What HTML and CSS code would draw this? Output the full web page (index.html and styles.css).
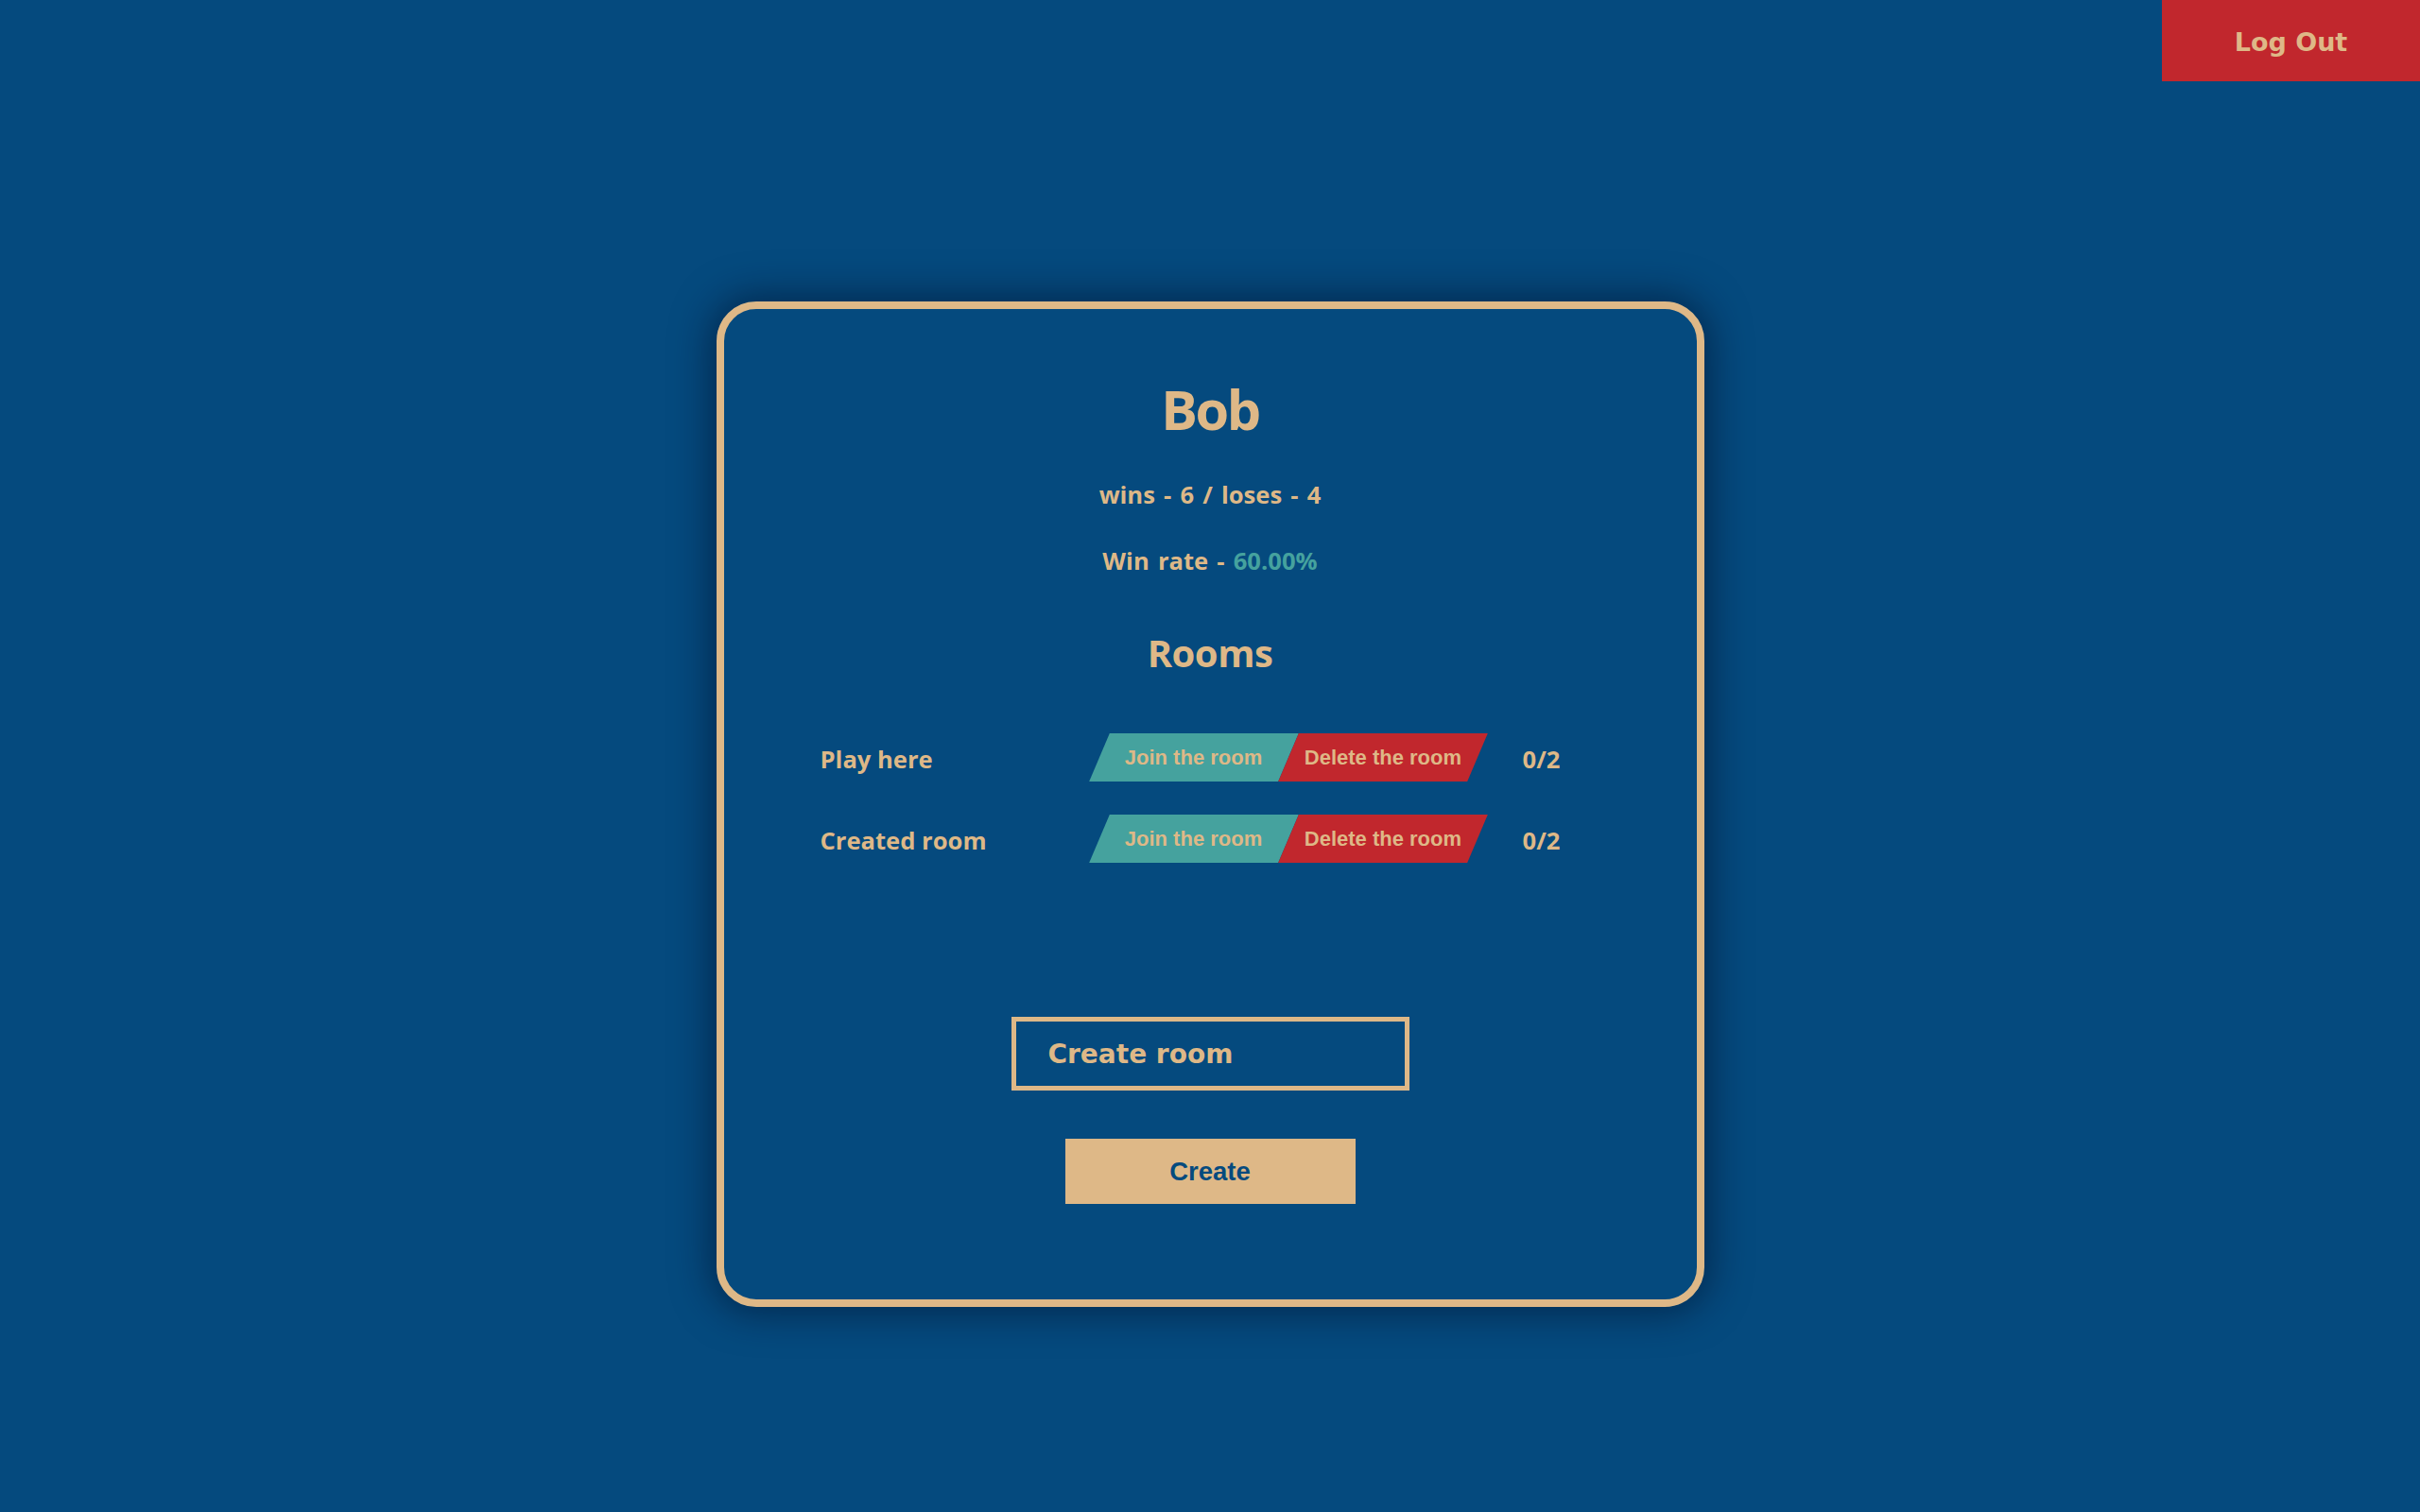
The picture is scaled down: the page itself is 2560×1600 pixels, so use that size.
FILE: index.html
```html
<!DOCTYPE html>
<html lang="en">
<head>
<meta charset="utf-8">
<title>Profile</title>
<link rel="stylesheet" href="styles.css">
</head>
<body>
<header class="topbar">
  <button class="logout">Log Out</button>
</header>
<main class="card">
  <h1 class="name">Bob</h1>
  <p class="stat">wins - 6 / loses - 4</p>
  <p class="stat rate">Win rate - <span class="pct">60.00%</span></p>
  <h2 class="rooms-title">Rooms</h2>
  <div class="rooms">
    <div class="room">
      <span class="room-name">Play here</span>
      <div class="actions">
        <button class="btn join"><span>Join the room</span></button>
        <button class="btn del"><span>Delete the room</span></button>
      </div>
      <span class="count">0/2</span>
    </div>
    <div class="room">
      <span class="room-name">Created room</span>
      <div class="actions">
        <button class="btn join"><span>Join the room</span></button>
        <button class="btn del"><span>Delete the room</span></button>
      </div>
      <span class="count">0/2</span>
    </div>
  </div>
  <input class="room-input" type="text" placeholder="Create room">
  <button class="create">Create</button>
</main>
</body>
</html>
```
FILE: styles.css
```css
html, body {
  margin: 0;
  padding: 0;
}
body {
  background: #054a7e;
  min-height: 1600px;
  font-family: "Open Sans", "Noto Sans", sans-serif;
  font-weight: 700;
  color: #deb887;
}
.topbar {
  display: flex;
  justify-content: flex-end;
  height: 86px;
}
.logout {
  width: 273px;
  height: 86px;
  border: none;
  margin: 0;
  padding: 2px 0 0;
  background: #c1272d;
  color: #deb887;
  font-family: "DejaVu Sans", sans-serif;
  font-weight: 700;
  font-size: 27px;
}
.card {
  box-sizing: border-box;
  width: 1045px;
  height: 1064px;
  margin: 233px auto 0;
  border: 8px solid #deb887;
  border-radius: 42px;
  box-shadow: 0 0 40px 6px rgba(0, 15, 40, 0.55);
  padding-top: 71px;
  display: flex;
  flex-direction: column;
  align-items: center;
}
.name {
  margin: 0;
  font-size: 57.6px;
  line-height: 69px;
  font-weight: 700;
  letter-spacing: -2.5px;
}
.stat {
  margin: 40.6px 0 0;
  font-size: 25.6px;
  line-height: 31px;
  word-spacing: 2.5px;
}
.rate {
  margin-top: 39px;
}
.pct {
  color: #45a29e;
}
.rooms-title {
  margin: 58px 0 0;
  font-size: 40px;
  line-height: 48px;
  font-weight: 700;
  letter-spacing: -0.5px;
}
.rooms {
  align-self: stretch;
  margin-top: 61.5px;
  padding-left: 102px;
  display: flex;
  flex-direction: column;
  gap: 35px;
}
.room {
  display: flex;
  align-items: center;
  height: 51px;
}
.room-name {
  width: 295px;
  font-size: 25.6px;
  line-height: 31px;
  padding-top: 3px;
}
.actions {
  display: flex;
  width: 400px;
  height: 51px;
}
.btn {
  width: 200px;
  height: 51px;
  border: none;
  margin: 0;
  padding: 0;
  transform: skewX(-23deg);
  color: #deb887;
  font-family: "Liberation Sans", Arial, sans-serif;
  font-weight: 700;
  font-size: 22px;
}
.btn span {
  display: inline-block;
  transform: skewX(23deg);
}
.join {
  background: #45a29e;
}
.del {
  background: #c1272d;
}
.count {
  margin-left: 48px;
  font-size: 25.6px;
  line-height: 31px;
  padding-top: 3px;
}
.room-input {
  box-sizing: border-box;
  width: 421px;
  height: 78px;
  margin-top: 163px;
  border: 5px solid #deb887;
  background: transparent;
  padding: 0 0 0 34px;
  color: #deb887;
  font-family: "DejaVu Sans", sans-serif;
  font-weight: 700;
  font-size: 28px;
  outline: none;
}
.room-input::placeholder {
  color: #deb887;
  opacity: 1;
}
.create {
  width: 307px;
  height: 69px;
  margin-top: 51px;
  border: none;
  padding: 0;
  background: #deb887;
  color: #054a7e;
  font-family: "Liberation Sans", Arial, sans-serif;
  font-weight: 700;
  font-size: 27.5px;
}
```
